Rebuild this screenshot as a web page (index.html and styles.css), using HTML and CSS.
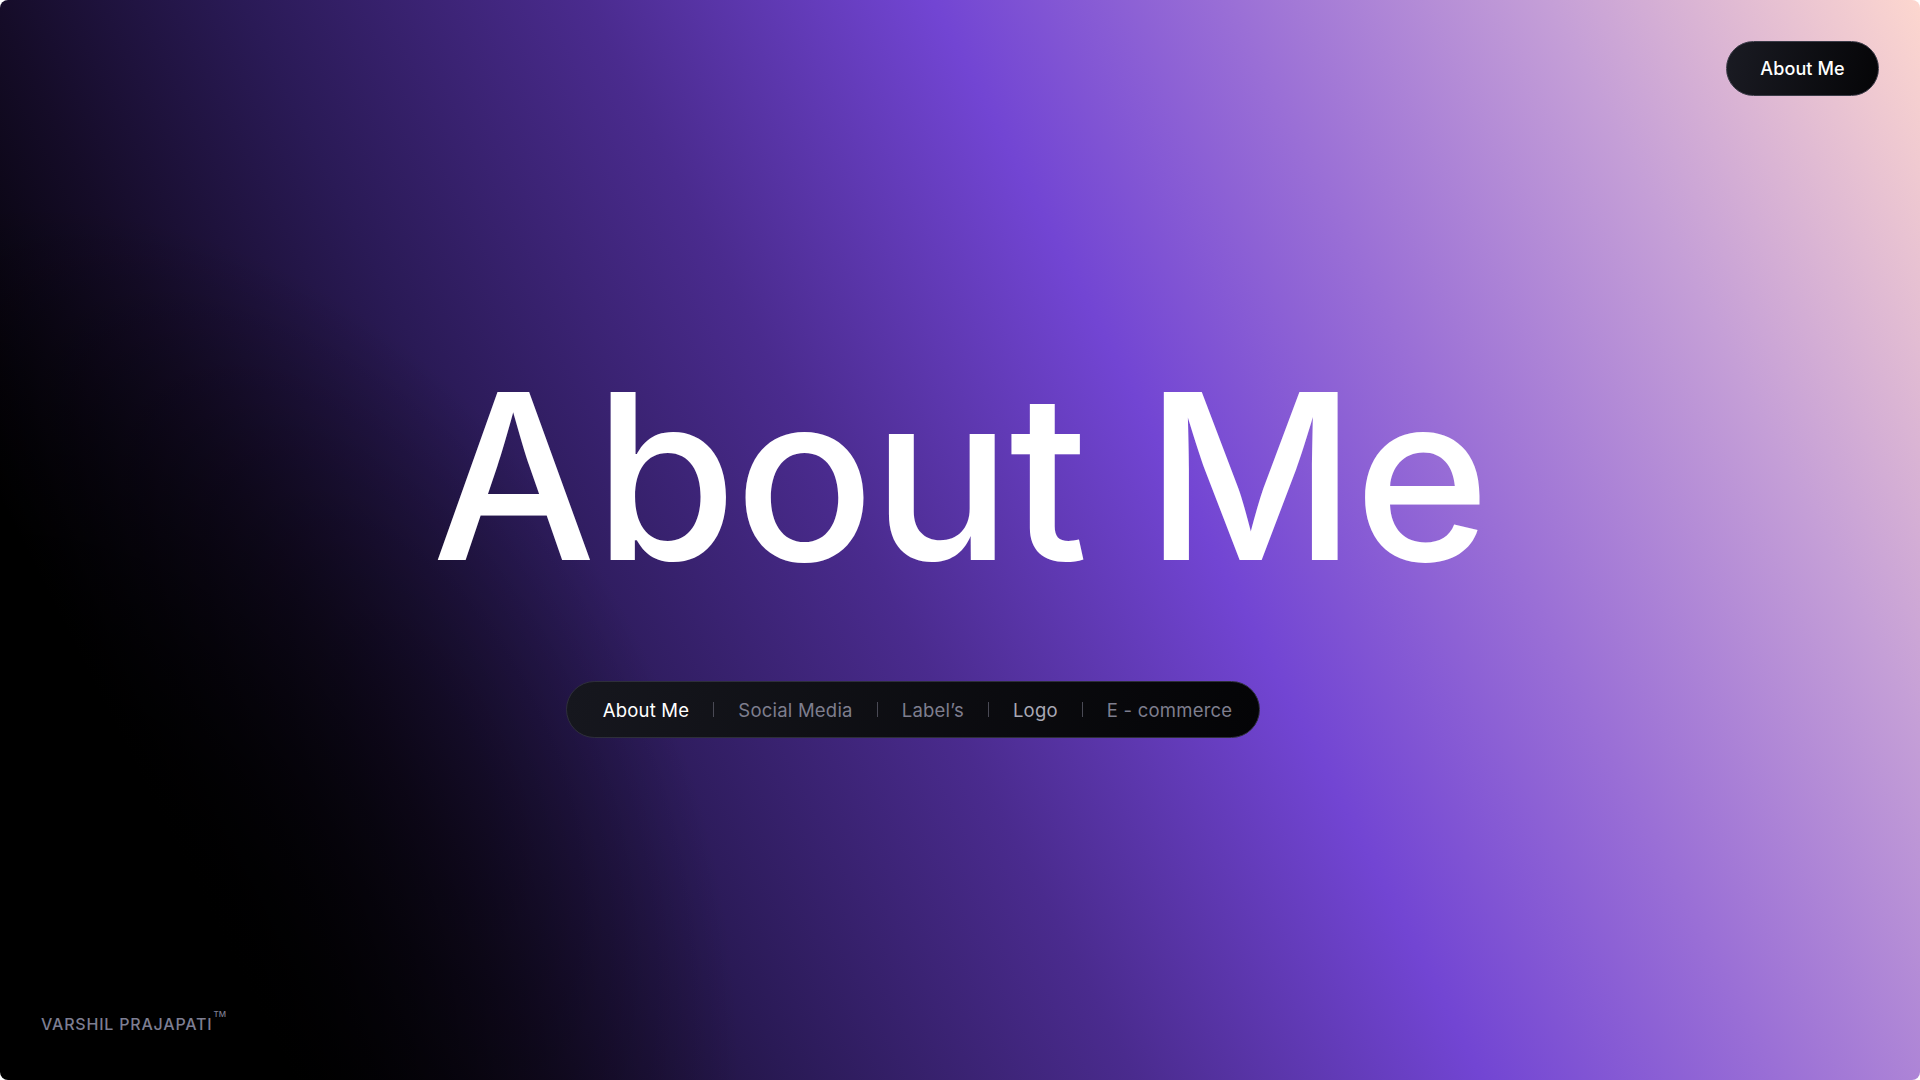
FILE: index.html
```html
<!DOCTYPE html>
<html lang="en">
<head>
<meta charset="utf-8">
<title>About Me</title>
<link rel="stylesheet" href="styles.css">
</head>
<body>
<main class="stage">
  <header class="topbar">
    <a class="pill-btn" href="#">About Me</a>
  </header>
  <h1 class="hero-title">About Me</h1>
  <nav class="tabs">
    <a class="tab tab-active" href="#">About Me</a>
    <span class="sep"></span>
    <a class="tab" href="#">Social Media</a>
    <span class="sep"></span>
    <a class="tab" href="#">Label’s</a>
    <span class="sep"></span>
    <a class="tab tab-hover" href="#">Logo</a>
    <span class="sep"></span>
    <a class="tab" href="#">E - commerce</a>
  </nav>
  <footer class="brand">VARSHIL PRAJAPATI<sup class="tm">TM</sup></footer>
</main>
</body>
</html>
```
FILE: styles.css
```css
* { box-sizing: border-box; }
html, body { margin: 0; padding: 0; background: #ffffff; }
body { width: 1920px; height: 1080px; overflow: hidden; font-family: "Inter", "Liberation Sans", sans-serif; }

.stage {
  width: 1920px;
  height: 1080px;
  border-radius: 8px;
  overflow: hidden;
  display: flex;
  flex-direction: column;
  background:
    radial-gradient(ellipse 740px 880px at 0 100%, rgba(0,0,0,1) 30%, rgba(0,0,0,0.5) 62%, rgba(0,0,0,0) 100%),
    linear-gradient(63deg,
      #000000 0%,
      #000000 12%,
      #150c28 22%,
      #2a1a56 32%,
      #4a2b8e 46%,
      #7245d3 60%,
      #9a6fd6 72%,
      #c59fd7 85%,
      #fdd7cf 100%);
}

.topbar {
  display: flex;
  justify-content: flex-end;
  padding: 41px 41px 0 0;
}

.pill-btn {
  display: flex;
  align-items: center;
  justify-content: center;
  width: 153px;
  height: 55px;
  border-radius: 28px;
  border: 1.5px solid #3a3b47;
  background: linear-gradient(100deg, #1a1b23 0%, #050507 100%);
  color: #ffffff;
  font-size: 18px;
  font-weight: 500;
  text-decoration: none;
  letter-spacing: 0.1px;
}

.hero-title {
  margin: 265px 0 0 0;
  text-align: center;
  color: #ffffff;
  font-size: 231px;
  font-weight: 500;
  line-height: 231px;
  letter-spacing: -2px;
}

.tabs {
  align-self: center;
  margin: 89px 94px 0 0;
  display: flex;
  align-items: center;
  gap: 24px;
  height: 57px;
  padding: 0 27px 0 36px;
  border-radius: 29px;
  border: 1.5px solid #2e2f3a;
  background: linear-gradient(100deg, #16171e 0%, #040406 100%);
}

.tab {
  font-size: 18.5px;
  letter-spacing: 0.22px;
  color: #7e7e8e;
  text-decoration: none;
  white-space: nowrap;
}
.tab-active { color: #ffffff; }
.tab-hover { color: #a8a8b4; }

.sep {
  width: 1px;
  height: 15px;
  background: #4a4a55;
}

.brand {
  margin-top: auto;
  padding: 0 0 46px 41px;
  color: #7d7e92;
  font-size: 16px;
  font-weight: 500;
  letter-spacing: 0.8px;
}
.tm {
  font-size: 8px;
  vertical-align: top;
  position: relative;
  top: -5px;
  margin-left: 1px;
  letter-spacing: 0;
}
```
